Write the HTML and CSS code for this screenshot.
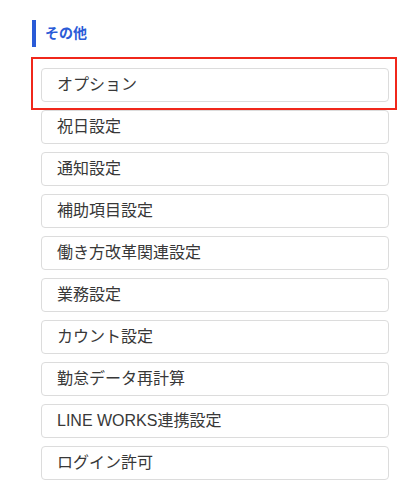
FILE: index.html
```html
<!DOCTYPE html>
<html lang="ja">
<head>
  <meta charset="UTF-8" />
  <title>その他</title>
  <link rel="stylesheet" href="styles.css">
</head>
<body>
  <div class="settings">
    <h3 class="section-title">その他</h3>

    <div class="menu">
      <div class="highlight">
        <a class="menu-item" href="#">オプション</a>
      </div>
      <a class="menu-item" href="#">祝日設定</a>
      <a class="menu-item" href="#">通知設定</a>
      <a class="menu-item" href="#">補助項目設定</a>
      <a class="menu-item" href="#">働き方改革関連設定</a>
      <a class="menu-item" href="#">業務設定</a>
      <a class="menu-item" href="#">カウント設定</a>
      <a class="menu-item" href="#">勤怠データ再計算</a>
      <a class="menu-item" href="#">LINE WORKS連携設定</a>
      <a class="menu-item" href="#">ログイン許可</a>
    </div>
  </div>
</body>
</html>
```

FILE: styles.css
```css
body, html {
  margin: 0;
  padding: 0;
  background-color: #ffffff;
  font-family: "Liberation Sans", "Noto Sans CJK JP", sans-serif;
}

.settings {
  padding: 20px 0 0 32px;
}

.section-title {
  margin: 0;
  height: 27px;
  line-height: 27px;
  padding-left: 9px;
  border-left: 4px solid #2a5bd7;
  font-size: 14px;
  font-weight: bold;
  color: #2a5bd7;
}

.menu {
  display: flex;
  flex-direction: column;
  margin-top: 10px;
}

.highlight {
  width: 366px;
  margin-left: -1px;
  padding: 9px 0 6px 8px;
  border: 2px solid #f0271b;
  box-sizing: border-box;
}

.highlight .menu-item {
  margin: 0;
}

.menu-item {
  display: block;
  box-sizing: border-box;
  width: 348px;
  height: 34px;
  line-height: 32px;
  margin: 0 0 8px 9px;
  padding-left: 15px;
  border: 1px solid #dcdcdc;
  border-radius: 4px;
  background-color: #ffffff;
  color: #383838;
  font-size: 16px;
  text-decoration: none;
}
```
